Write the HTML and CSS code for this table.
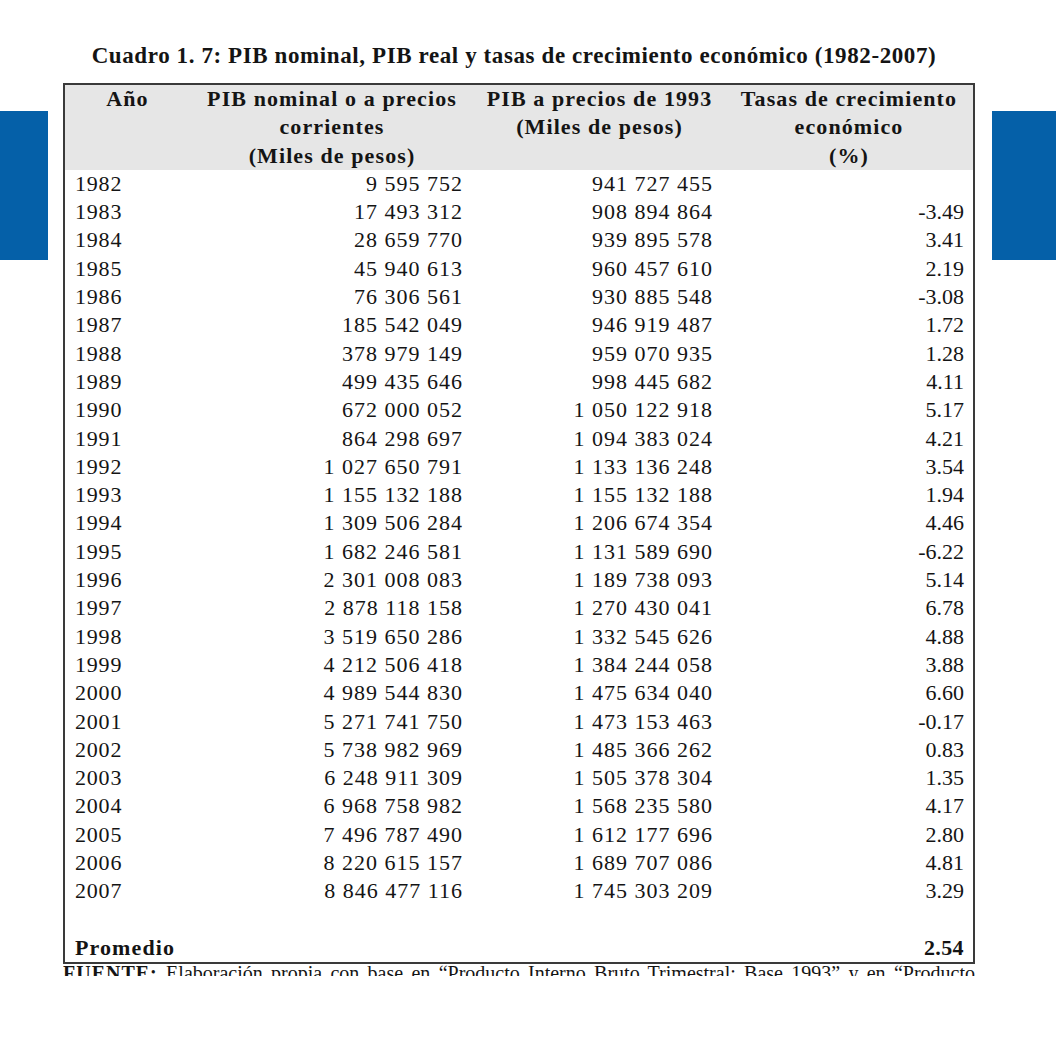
FILE: index.html
```html
<!DOCTYPE html>
<html lang="es">
<head>
<meta charset="utf-8">
<title>Cuadro 1.7</title>
<link rel="stylesheet" href="styles.css">
</head>
<body>
<div class="page">
  <div class="side side-left"></div>
  <div class="content">
    <div class="title">Cuadro 1. 7: PIB nominal, PIB real y tasas de crecimiento económico (1982-2007)</div>
    <div class="frame">
      <table class="data">
        <colgroup>
          <col class="c1"><col class="c2"><col class="c3"><col class="c4">
        </colgroup>
        <thead>
          <tr>
            <th>Año</th>
            <th>PIB nominal o a precios<br>corrientes<br>(Miles de pesos)</th>
            <th>PIB a precios de 1993<br>(Miles de pesos)<br>&nbsp;</th>
            <th>Tasas de crecimiento<br>económico<br>(%)</th>
          </tr>
        </thead>
        <tbody>
          <tr><td>1982</td><td>9 595 752</td><td>941 727 455</td><td></td></tr>
          <tr><td>1983</td><td>17 493 312</td><td>908 894 864</td><td>-3.49</td></tr>
          <tr><td>1984</td><td>28 659 770</td><td>939 895 578</td><td>3.41</td></tr>
          <tr><td>1985</td><td>45 940 613</td><td>960 457 610</td><td>2.19</td></tr>
          <tr><td>1986</td><td>76 306 561</td><td>930 885 548</td><td>-3.08</td></tr>
          <tr><td>1987</td><td>185 542 049</td><td>946 919 487</td><td>1.72</td></tr>
          <tr><td>1988</td><td>378 979 149</td><td>959 070 935</td><td>1.28</td></tr>
          <tr><td>1989</td><td>499 435 646</td><td>998 445 682</td><td>4.11</td></tr>
          <tr><td>1990</td><td>672 000 052</td><td>1 050 122 918</td><td>5.17</td></tr>
          <tr><td>1991</td><td>864 298 697</td><td>1 094 383 024</td><td>4.21</td></tr>
          <tr><td>1992</td><td>1 027 650 791</td><td>1 133 136 248</td><td>3.54</td></tr>
          <tr><td>1993</td><td>1 155 132 188</td><td>1 155 132 188</td><td>1.94</td></tr>
          <tr><td>1994</td><td>1 309 506 284</td><td>1 206 674 354</td><td>4.46</td></tr>
          <tr><td>1995</td><td>1 682 246 581</td><td>1 131 589 690</td><td>-6.22</td></tr>
          <tr><td>1996</td><td>2 301 008 083</td><td>1 189 738 093</td><td>5.14</td></tr>
          <tr><td>1997</td><td>2 878 118 158</td><td>1 270 430 041</td><td>6.78</td></tr>
          <tr><td>1998</td><td>3 519 650 286</td><td>1 332 545 626</td><td>4.88</td></tr>
          <tr><td>1999</td><td>4 212 506 418</td><td>1 384 244 058</td><td>3.88</td></tr>
          <tr><td>2000</td><td>4 989 544 830</td><td>1 475 634 040</td><td>6.60</td></tr>
          <tr><td>2001</td><td>5 271 741 750</td><td>1 473 153 463</td><td>-0.17</td></tr>
          <tr><td>2002</td><td>5 738 982 969</td><td>1 485 366 262</td><td>0.83</td></tr>
          <tr><td>2003</td><td>6 248 911 309</td><td>1 505 378 304</td><td>1.35</td></tr>
          <tr><td>2004</td><td>6 968 758 982</td><td>1 568 235 580</td><td>4.17</td></tr>
          <tr><td>2005</td><td>7 496 787 490</td><td>1 612 177 696</td><td>2.80</td></tr>
          <tr><td>2006</td><td>8 220 615 157</td><td>1 689 707 086</td><td>4.81</td></tr>
          <tr><td>2007</td><td>8 846 477 116</td><td>1 745 303 209</td><td>3.29</td></tr>
          <tr><td>&nbsp;</td><td></td><td></td><td></td></tr>
          <tr class="avg"><td>Promedio</td><td></td><td></td><td>2.54</td></tr>
        </tbody>
      </table>
    </div>
    <div class="source-clip">
      <p class="source"><b>FUENTE:</b> Elaboración propia con base en “Producto Interno Bruto Trimestral: Base 1993” y en “Producto</p>
    </div>
  </div>
  <div class="side side-right"></div>
</div>
</body>
</html>
```

FILE: styles.css
```css
html, body {
  margin: 0;
  padding: 0;
  background: #ffffff;
}

body {
  font-family: "Liberation Serif", "Times New Roman", serif;
  color: #141414;
  width: 1056px;
  height: 1056px;
  overflow: hidden;
}

.page {
  display: flex;
  align-items: flex-start;
}

.side {
  flex: none;
  height: 149px;
  margin-top: 111px;
  background: #0560a8;
}

.side-left {
  width: 48px;
  margin-right: 15px;
}

.side-right {
  width: 64px;
  margin-left: 17px;
}

.content {
  flex: none;
  width: 912px;
  padding-top: 42px;
}

.title {
  font-weight: bold;
  font-size: 23px;
  letter-spacing: 0.6px;
  line-height: 28px;
  text-align: center;
  padding-right: 10px;
  white-space: nowrap;
  margin-bottom: 13px;
}

.frame {
  border: 2px solid #3a3a3a;
}

.data {
  width: 100%;
  table-layout: fixed;
  border-collapse: collapse;
  font-size: 22px;
  line-height: 28.3px;
}

.c1 { width: 125px; }
.c2 { width: 284px; }
.c3 { width: 251px; }
.c4 { width: 248px; }

.data th {
  background: #e6e6e6;
  font-weight: bold;
  letter-spacing: 1.1px;
  text-align: center;
  padding: 0;
  vertical-align: top;
  white-space: nowrap;
}

.data td {
  padding: 0;
  height: 28.3px;
  text-align: right;
  white-space: nowrap;
}

.data td:nth-child(1) {
  text-align: left;
  padding-left: 10px;
  letter-spacing: 0.8px;
}

.data td:nth-child(2) {
  padding-right: 11px;
  letter-spacing: 1px;
}

.data td:nth-child(3) {
  padding-right: 12px;
  letter-spacing: 1px;
}

.data td:nth-child(4) { padding-right: 9px; }

.avg td {
  font-weight: bold;
}

.avg td:nth-child(1) {
  letter-spacing: 1.1px;
}

.avg td:nth-child(4) {
  letter-spacing: 0.4px;
}

.source-clip {
  height: 12px;
  overflow: hidden;
}

.source {
  margin: 0;
  font-size: 20px;
  line-height: 18px;
  text-align: justify;
  text-align-last: justify;
  white-space: nowrap;
}

.source b {
  letter-spacing: 1px;
}
```
